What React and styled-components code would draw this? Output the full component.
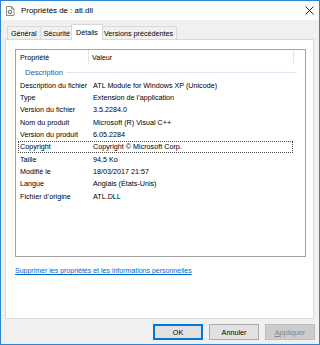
import React from "react";
import styled, { createGlobalStyle } from "styled-components";

const GlobalStyle = createGlobalStyle`
    html, body {
        margin: 0;
        padding: 0;
        background: #fff;
    }
    body {
        font-family: "Segoe UI", "Liberation Sans", Arial, sans-serif;
        font-size: 7.2px;
        color: #000;
    }
`

const Window = styled.div`
    width: 320px;
    height: 345px;
    box-sizing: border-box;
    border: 1px solid #2b84d8;
    background: #f0f0f0;
    display: flex;
    flex-direction: column;
`

const TitleBar = styled.div`
    height: 19px;
    flex-shrink: 0;
    background: #fff;
    display: flex;
    align-items: center;
    padding: 0 5px;
`

const Title = styled.span`
    flex: 1;
    margin-left: 6px;
    font-size: 7.9px;
`

const TabStrip = styled.div`
    height: 20px;
    flex-shrink: 0;
    display: flex;
    align-items: flex-end;
    padding-left: 6px;
`

const Tab = styled.div`
    position: relative;
    z-index: ${(p) => (p.$active ? 1 : 0)};
    box-sizing: border-box;
    height: ${(p) => (p.$active ? "16px" : "14px")};
    padding: ${(p) => (p.$active ? "0 4px 1px" : "0 3px")};
    margin: ${(p) => (p.$active ? "0 -2px 0 -3px" : "0 0 0 -1px")};
    border: 1px solid #d9d9d9;
    border-bottom: ${(p) => (p.$active ? "none" : "1px solid #d9d9d9")};
    background: ${(p) => (p.$active ? "#fff" : "#f0f0f0")};
    display: flex;
    align-items: center;
    white-space: nowrap;
    &:first-child {
        margin-left: 0;
    }
`

const Panel = styled.div`
    margin: -1px 5px 0 4px;
    height: 280px;
    flex-shrink: 0;
    box-sizing: border-box;
    border: 1px solid #d9d9d9;
    background: #fff;
    padding: 9px 7px 0 9px;
    display: flex;
    flex-direction: column;
`

const ListView = styled.div`
    width: 291px;
    height: 208px;
    box-sizing: border-box;
    border: 1px solid #a3a3a3;
    display: flex;
    flex-direction: column;
`

const Header = styled.div`
    height: 15px;
    display: flex;
`

const HeaderCell = styled.div`
    width: ${(p) => p.$width}px;
    box-sizing: border-box;
    padding-left: ${(p) => p.$pad}px;
    border-right: 1px solid #e5e5e5;
    display: flex;
    align-items: center;
`

const Group = styled.div`
    height: 14px;
    display: flex;
    align-items: center;
    padding: 0 8px 0 9px;
    color: #2e4fa8;
    font-size: 7.6px;
`

const GroupLine = styled.div`
    flex: 1;
    height: 1px;
    margin-left: 3px;
    background: #dbe5f3;
`

const Row = styled.div`
    height: 12.33px;
    box-sizing: border-box;
    margin: 0 12px 0 2px;
    border: 1px ${(p) => (p.$focused ? "dotted #4a4a4a" : "solid transparent")};
    display: flex;
    align-items: center;
    white-space: nowrap;
`

const Label = styled.span`
    width: 73px;
    padding-left: 1px;
    flex-shrink: 0;
`

const Value = styled.span`
    flex: 1;
`

const Link = styled.a`
    margin-top: 9px;
    line-height: 10px;
    color: #0066cc;
    text-decoration: underline;
    cursor: pointer;
    align-self: flex-start;
    font-size: 7px;
`

const ButtonBar = styled.div`
    display: flex;
    justify-content: flex-end;
    gap: 6px;
    padding: 5px 4px 0 0;
`

const Button = styled.button`
    width: 50px;
    height: 16px;
    box-sizing: border-box;
    padding: 0;
    font-family: inherit;
    font-size: 7.2px;
    font-weight: 400;
    background: ${(p) => (p.disabled ? "#cccccc" : "#e1e1e1")};
    color: ${(p) => (p.disabled ? "#838383" : "#000")};
    border: 1px solid ${(p) => (p.$default ? "#0078d7" : p.disabled ? "#bfbfbf" : "#adadad")};
    box-shadow: ${(p) => (p.$default ? "inset 0 0 0 1px #0078d7" : "none")};
    u {
        text-decoration: underline;
    }
`

const tabs = ["Général", "Sécurité", "Détails", "Versions précédentes"];

const rows = [
    ["Description du fichier", "ATL Module for Windows XP (Unicode)"],
    ["Type", "Extension de l\u2019application"],
    ["Version du fichier", "3.5.2284.0"],
    ["Nom du produit", "Microsoft (R) Visual C++"],
    ["Version du produit", "6.05.2284"],
    ["Copyright", "Copyright \u00a9 Microsoft Corp."],
    ["Taille", "94,5 Ko"],
    ["Modifié le", "18/03/2017 21:57"],
    ["Langue", "Anglais (États-Unis)"],
    ["Fichier d\u2019origine", "ATL.DLL"],
];

function FileIcon() {
    return (
        <svg width="9" height="10" viewBox="0 0 9 10">
            <path d="M0.5 0.5h5l2.5 2.5v6.5h-7.5z" fill="#fff" stroke="#8a8a8a" />
            <path d="M5.5 0.5v2.5h2.5" fill="none" stroke="#8a8a8a" />
            <circle cx="4" cy="6" r="1.8" fill="none" stroke="#6d6d6d" strokeWidth="1" />
            <circle cx="4" cy="6" r="0.5" fill="#6d6d6d" />
        </svg>
    );
}

function CloseIcon() {
    return (
        <svg width="9" height="9" viewBox="0 0 9 9">
            <path d="M0.5 0.5L8.5 8.5M8.5 0.5L0.5 8.5" stroke="#111" strokeWidth="0.9" />
        </svg>
    );
}

function App() {
    return (
        <>
            <GlobalStyle />
            <Window>
                <TitleBar>
                    <FileIcon />
                    <Title>Propriétés de : atl.dll</Title>
                    <CloseIcon />
                </TitleBar>
                <TabStrip>
                    {tabs.map((t) => (
                        <Tab key={t} $active={t === "Détails"}>
                            {t}
                        </Tab>
                    ))}
                </TabStrip>
                <Panel>
                    <ListView>
                        <Header>
                            <HeaderCell $width={73} $pad={4}>Propriété</HeaderCell>
                            <HeaderCell $width={205} $pad={3}>Valeur</HeaderCell>
                        </Header>
                        <Group>
                            Description
                            <GroupLine />
                        </Group>
                        {rows.map(([label, value]) => (
                            <Row key={label} $focused={label === "Copyright"}>
                                <Label>{label}</Label>
                                <Value>{value}</Value>
                            </Row>
                        ))}
                    </ListView>
                    <Link>Supprimer les propriétés et les informations personnelles</Link>
                </Panel>
                <ButtonBar>
                    <Button $default>OK</Button>
                    <Button>Annuler</Button>
                    <Button disabled>
                        <u>A</u>ppliquer
                    </Button>
                </ButtonBar>
            </Window>
        </>
    );
}

export default App;
